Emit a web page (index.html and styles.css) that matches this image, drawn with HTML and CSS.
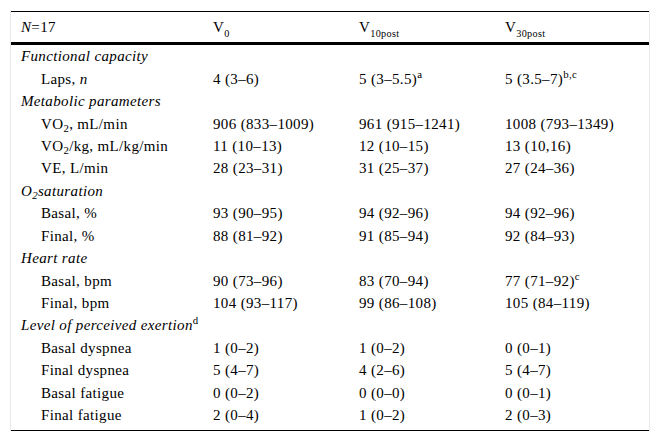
FILE: index.html
```html
<!DOCTYPE html>
<html lang="en">
<head>
<meta charset="utf-8">
<title>Table</title>
<link rel="stylesheet" href="styles.css">
</head>
<body>
<div class="frame">
<table class="data">
<colgroup>
<col class="c1"><col class="c2"><col class="c3"><col class="c4">
</colgroup>
<thead>
<tr><th><i>N</i>=17</th><th>V<sub>0</sub></th><th>V<sub>10post</sub></th><th>V<sub>30post</sub></th></tr>
</thead>
<tbody>
<tr class="sec"><td colspan="4"><i>Functional capacity</i></td></tr>
<tr><td class="ind">Laps, <i>n</i></td><td>4 (3–6)</td><td>5 (3–5.5)<sup>a</sup></td><td>5 (3.5–7)<sup>b,c</sup></td></tr>
<tr class="sec"><td colspan="4"><i>Metabolic parameters</i></td></tr>
<tr><td class="ind">VO<sub>2</sub>, mL/min</td><td>906 (833–1009)</td><td>961 (915–1241)</td><td>1008 (793–1349)</td></tr>
<tr><td class="ind">VO<sub>2</sub>/kg, mL/kg/min</td><td>11 (10–13)</td><td>12 (10–15)</td><td>13 (10,16)</td></tr>
<tr><td class="ind">VE, L/min</td><td>28 (23–31)</td><td>31 (25–37)</td><td>27 (24–36)</td></tr>
<tr class="sec"><td colspan="4"><i>O<sub>2</sub>saturation</i></td></tr>
<tr><td class="ind">Basal, %</td><td>93 (90–95)</td><td>94 (92–96)</td><td>94 (92–96)</td></tr>
<tr><td class="ind">Final, %</td><td>88 (81–92)</td><td>91 (85–94)</td><td>92 (84–93)</td></tr>
<tr class="sec"><td colspan="4"><i>Heart rate</i></td></tr>
<tr><td class="ind">Basal, bpm</td><td>90 (73–96)</td><td>83 (70–94)</td><td>77 (71–92)<sup>c</sup></td></tr>
<tr><td class="ind">Final, bpm</td><td>104 (93–117)</td><td>99 (86–108)</td><td>105 (84–119)</td></tr>
<tr class="sec"><td colspan="4"><i>Level of perceived exertion</i><sup>d</sup></td></tr>
<tr><td class="ind">Basal dyspnea</td><td>1 (0–2)</td><td>1 (0–2)</td><td>0 (0–1)</td></tr>
<tr><td class="ind">Final dyspnea</td><td>5 (4–7)</td><td>4 (2–6)</td><td>5 (4–7)</td></tr>
<tr><td class="ind">Basal fatigue</td><td>0 (0–2)</td><td>0 (0–0)</td><td>0 (0–1)</td></tr>
<tr class="last"><td class="ind">Final fatigue</td><td>2 (0–4)</td><td>1 (0–2)</td><td>2 (0–3)</td></tr>
</tbody>
</table>
</div>
</body>
</html>
```
FILE: styles.css
```css
html, body {
  margin: 0;
  padding: 0;
  background: #fff;
}
body {
  font-family: "Liberation Serif", "Times New Roman", serif;
  font-size: 15px;
  letter-spacing: 0.35px;
  color: #000;
}
.frame {
  margin: 10px 0 0 10px;
  width: 638px;
  border-left: 1px solid #e8e8e8;
  border-right: 1px solid #e8e8e8;
  padding-top: 1px;
}
.data {
  width: 638px;
  border-collapse: collapse;
  table-layout: fixed;
  border-top: 1px solid #000;
  border-bottom: 1px solid #000;
}
.c1 { width: 192px; }
.c2 { width: 146px; }
.c3 { width: 146px; }
.c4 { width: 154px; }
.data th {
  font-weight: normal;
  text-align: left;
  padding: 6px 0 0 10px;
  height: 24px;
  line-height: 18px;
  vertical-align: top;
  border-bottom: 3px solid #000;
}
.data th sub {
  font-size: 0.68em;
  vertical-align: -0.5em;
}
.data td {
  padding: 0 0 0 10px;
  height: 22.44px;
  line-height: 18px;
  vertical-align: middle;
  white-space: nowrap;
}
.data td.ind {
  padding-left: 30px;
}
.data tr.last td {
  height: 22.44px;
  padding-bottom: 4px;
}
sub {
  font-size: 0.72em;
  vertical-align: -0.3em;
  line-height: 0;
}
sup {
  font-size: 0.72em;
  vertical-align: 0.55em;
  line-height: 0;
}
```
